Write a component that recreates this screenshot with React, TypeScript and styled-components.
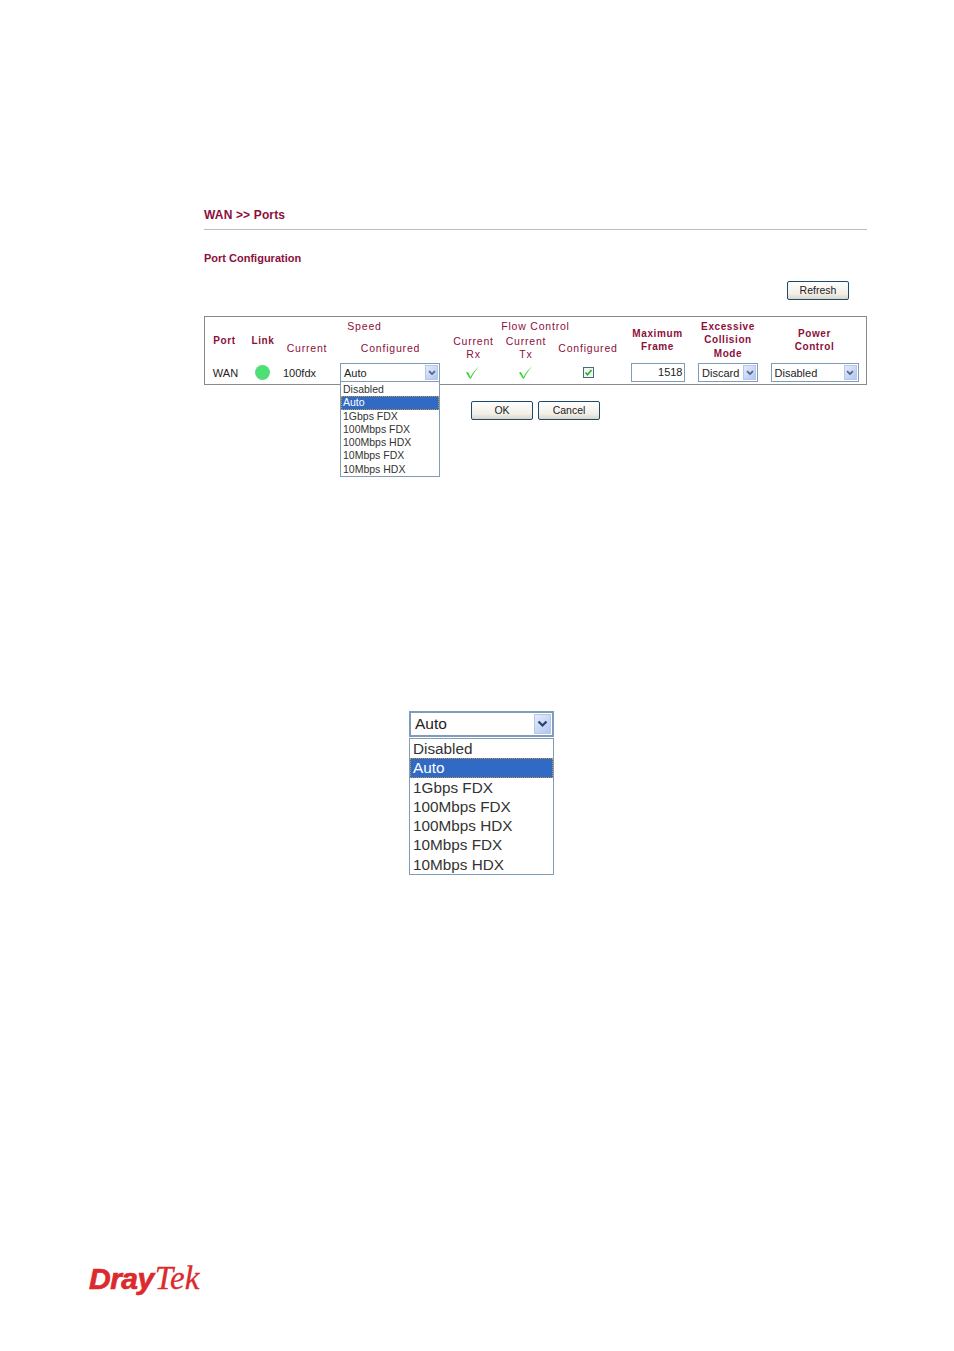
import styled, { createGlobalStyle } from "styled-components";

const GlobalStyle = createGlobalStyle`
  html, body {
    margin: 0;
    padding: 0;
    background: #fff;
    font-family: "Liberation Sans", Arial, sans-serif;
  }
`;

const Page = styled.div`
  width: 954px;
  height: 1351px;
  overflow: hidden;
  display: flex;
  flex-direction: column;
`;

const Panel = styled.section`
  margin: 208px 87px 0 204px;
  display: flex;
  flex-direction: column;
`;

const Title = styled.h1`
  margin: 0;
  height: 21px;
  border-bottom: 1px solid #bdbdbd;
  font-size: 12px;
  line-height: 14px;
  letter-spacing: 0.15px;
  font-weight: bold;
  color: #8c0f3c;
`;

const SubTitle = styled.h2`
  margin: 21px 0 0;
  font-size: 11px;
  line-height: 14px;
  font-weight: bold;
  color: #8c0f3c;
`;

const RefreshRow = styled.div`
  margin-top: 16px;
  padding-right: 18px;
  display: flex;
  justify-content: flex-end;
`;

const Button = styled.button`
  width: 62px;
  height: 19px;
  padding: 0 0 2px;
  border: 1px solid #1f4a6e;
  border-radius: 2px;
  background: linear-gradient(#ffffff, #f1efe6 70%, #d9d6c8);
  font-family: "Liberation Sans", Arial, sans-serif;
  font-size: 10.5px;
  color: #222;
`;

const Table = styled.div`
  position: relative;
  margin-top: 16px;
  height: 69px;
  box-sizing: border-box;
  border: 1px solid #8a8a8a;
  display: grid;
  grid-template-columns: 39px 38px 58px 107px 53px 52px 72px 67px 74px 99px;
  grid-template-rows: 18px 26px 23px;
`;

const Head = styled.div<{ $col: string; $row: string; $dx?: number; $dy?: number }>`
  grid-column: ${(p) => p.$col};
  grid-row: ${(p) => p.$row};
  align-self: center;
  justify-self: center;
  transform: translate(${(p) => p.$dx ?? 0}px, ${(p) => p.$dy ?? 1}px);
  font-size: 10.5px;
  line-height: 13.2px;
  letter-spacing: 0.8px;
  text-align: center;
  white-space: nowrap;
  color: #8c0f3c;
`;

const BoldHead = styled(Head)`
  font-weight: bold;
  font-size: 10px;
  letter-spacing: 0.6px;
`;

const Cell = styled.div<{ $justify?: string; $left?: number; $right?: number }>`
  grid-row: 3;
  padding: 0 ${(p) => p.$right ?? 0}px 0 ${(p) => p.$left ?? 0}px;
  display: flex;
  align-items: center;
  justify-content: ${(p) => p.$justify ?? "center"};
  font-size: 11px;
  color: #222;
`;

const LinkDot = styled.span`
  width: 15px;
  height: 15px;
  border-radius: 50%;
  background: radial-gradient(circle at 55% 40%, #3fe86c, #57d97d 70%, #9ad8aa);
`;

const SelectBox = styled.div<{ $width: number; $big?: boolean }>`
  width: ${(p) => p.$width}px;
  height: ${(p) => (p.$big ? 26 : 19)}px;
  box-sizing: border-box;
  padding: 0 1px 0 ${(p) => (p.$big ? 4 : 3)}px;
  border: ${(p) => (p.$big ? 2 : 1)}px solid #7f9db9;
  display: flex;
  align-items: center;
  justify-content: space-between;
  background: #fff;
  font-size: ${(p) => (p.$big ? 15.5 : 11)}px;
  color: #222;
`;

const Arrow = styled.span<{ $big?: boolean }>`
  width: ${(p) => (p.$big ? 17 : 13)}px;
  height: ${(p) => (p.$big ? 20 : 15)}px;
  display: flex;
  align-items: center;
  justify-content: center;
  border: 1px solid #b5c7ea;
  box-sizing: border-box;
  background: linear-gradient(135deg, #e3ebfb, #b4c6ef);
`;

const NumberInput = styled.div`
  width: 54px;
  height: 19px;
  box-sizing: border-box;
  padding-right: 1px;
  border: 1px solid #7f9db9;
  text-align: right;
  font-size: 11px;
  line-height: 17px;
  color: #222;
`;

const CheckBox = styled.span`
  width: 11px;
  height: 11px;
  box-sizing: border-box;
  border: 1px solid #4a6a80;
  background: #f0f5ee;
  display: flex;
  align-items: center;
  justify-content: center;
`;

const TickIcon = styled.svg`
  margin-bottom: 2px;
`;

const FloatingList = styled.div`
  position: absolute;
  left: 135px;
  top: 64px;
`;

const OptionList = styled.ul<{ $width: number; $big?: boolean }>`
  width: ${(p) => p.$width}px;
  margin: ${(p) => (p.$big ? "1px 0 0" : "0")};
  padding: ${(p) => (p.$big ? "0" : "1px 0 0")};
  box-sizing: border-box;
  list-style: none;
  border: 1px solid #7f9db9;
  background: #fff;
  font-size: ${(p) => (p.$big ? 15.3 : 10.5)}px;
  line-height: ${(p) => (p.$big ? 19.3 : 13.3)}px;
  color: #333;
`;

const Option = styled.li<{ $selected?: boolean; $big?: boolean }>`
  padding-left: ${(p) => (p.$big ? 3 : 2)}px;
  white-space: nowrap;
  background: ${(p) => (p.$selected ? "#316ac5" : "transparent")};
  color: ${(p) => (p.$selected ? "#fff" : "#333")};
  outline: ${(p) => (p.$selected ? "1px dotted #c9953a" : "none")};
  outline-offset: -1px;
`;

const Actions = styled.div`
  margin: 16px 0 0 267px;
  display: flex;
  gap: 5px;
`;

const BigSelect = styled.div`
  margin: 291px 0 0 409px;
  width: 145px;
  display: flex;
  flex-direction: column;
`;

const LogoRow = styled.div`
  margin: 386px 0 0 89px;
  display: flex;
  align-items: baseline;
  height: 34px;
  color: #dc2a2c;
  font-style: italic;
  line-height: 34px;
`;

const LogoDray = styled.span`
  font-family: "Liberation Sans", Arial, sans-serif;
  font-weight: bold;
  font-size: 30px;
  letter-spacing: -0.5px;
  -webkit-text-stroke: 0.7px #dc2a2c;
`;

const LogoTek = styled.span`
  margin-left: 1px;
  font-family: "Liberation Serif", "Times New Roman", serif;
  font-size: 33px;
  -webkit-text-stroke: 0.3px #dc2a2c;
`;

const speeds = ["Disabled", "Auto", "1Gbps FDX", "100Mbps FDX", "100Mbps HDX", "10Mbps FDX", "10Mbps HDX"];

const Chevron = ({ big }: { big?: boolean }) => (
  <svg width={big ? 11 : 8} height={big ? 8 : 6} viewBox="0 0 11 8">
    <path d="M1.5 1.5 L5.5 5.5 L9.5 1.5" fill="none" stroke={big ? "#25406e" : "#4d6185"} strokeWidth="2.2" />
  </svg>
);

const Select = ({ value, width, big }: { value: string; width: number; big?: boolean }) => (
  <SelectBox $width={width} $big={big}>
    <span>{value}</span>
    <Arrow $big={big}>
      <Chevron big={big} />
    </Arrow>
  </SelectBox>
);

const Options = ({ width, big }: { width: number; big?: boolean }) => (
  <OptionList $width={width} $big={big}>
    {speeds.map((s) => (
      <Option key={s} $selected={s === "Auto"} $big={big}>
        {s}
      </Option>
    ))}
  </OptionList>
);

const Tick = () => (
  <TickIcon width="15" height="14" viewBox="0 0 15 14">
    <path d="M1 7.5 L3 7 L5.5 12 C7.5 8 10.5 4 14.5 1 C11 4.5 8 9 6 13.5 L4.8 13.5 Z" fill="#35d335" />
  </TickIcon>
);

const App = () => {
  return (
    <Page>
      <GlobalStyle />
      <Panel>
        <Title>WAN &gt;&gt; Ports</Title>
        <SubTitle>Port Configuration</SubTitle>
        <RefreshRow>
          <Button>Refresh</Button>
        </RefreshRow>
        <Table>
          <BoldHead $col="1" $row="1 / 3" $dy={2}>Port</BoldHead>
          <BoldHead $col="2" $row="1 / 3" $dy={2}>Link</BoldHead>
          <Head $col="3 / 5" $row="1">Speed</Head>
          <Head $col="3" $row="2" $dx={-4}>Current</Head>
          <Head $col="4" $row="2" $dx={-3}>Configured</Head>
          <Head $col="5 / 8" $row="1">Flow Control</Head>
          <Head $col="5" $row="2" $dy={0}>Current<br />Rx</Head>
          <Head $col="6" $row="2" $dy={0}>Current<br />Tx</Head>
          <Head $col="7" $row="2">Configured</Head>
          <BoldHead $col="8" $row="1 / 3" $dy={1}>Maximum<br />Frame</BoldHead>
          <BoldHead $col="9" $row="1 / 3" $dy={1}>Excessive<br />Collision<br />Mode</BoldHead>
          <BoldHead $col="10" $row="1 / 3" $dy={1}>Power<br />Control</BoldHead>

          <Cell $left={2}>WAN</Cell>
          <Cell $right={2}><LinkDot /></Cell>
          <Cell $justify="flex-start" $left={1}>100fdx</Cell>
          <Cell $justify="flex-start"><Select value="Auto" width={100} /></Cell>
          <Cell $right={2}><Tick /></Cell>
          <Cell $right={2}><Tick /></Cell>
          <Cell>
            <CheckBox>
              <svg width="9" height="9" viewBox="0 0 9 9">
                <path d="M1.5 4.5 L3.5 6.8 L7.5 2" fill="none" stroke="#2fa83a" strokeWidth="1.6" />
              </svg>
            </CheckBox>
          </Cell>
          <Cell><NumberInput>1518</NumberInput></Cell>
          <Cell><Select value="Discard" width={60} /></Cell>
          <Cell><Select value="Disabled" width={88} /></Cell>

          <FloatingList>
            <Options width={100} />
          </FloatingList>
        </Table>
        <Actions>
          <Button>OK</Button>
          <Button>Cancel</Button>
        </Actions>
      </Panel>
      <BigSelect>
        <Select value="Auto" width={145} big />
        <Options width={145} big />
      </BigSelect>
      <LogoRow>
        <LogoDray>Dray</LogoDray>
        <LogoTek>Tek</LogoTek>
      </LogoRow>
    </Page>
  );
};

export default App;
